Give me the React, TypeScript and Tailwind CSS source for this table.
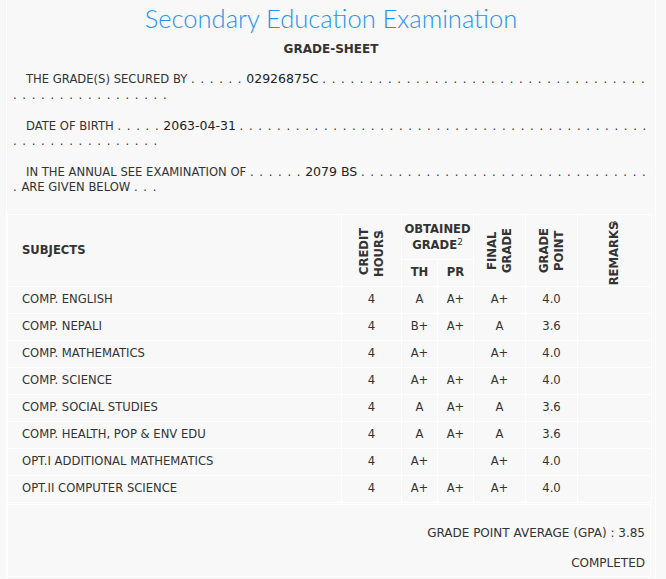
const body = "'DejaVu Sans', Verdana, sans-serif";

const subjects = [
  { name: "COMP. ENGLISH", ch: 4, th: "A", pr: "A+", fg: "A+", gp: "4.0" },
  { name: "COMP. NEPALI", ch: 4, th: "B+", pr: "A+", fg: "A", gp: "3.6" },
  { name: "COMP. MATHEMATICS", ch: 4, th: "A+", pr: "", fg: "A+", gp: "4.0" },
  { name: "COMP. SCIENCE", ch: 4, th: "A+", pr: "A+", fg: "A+", gp: "4.0" },
  { name: "COMP. SOCIAL STUDIES", ch: 4, th: "A", pr: "A+", fg: "A", gp: "3.6" },
  { name: "COMP. HEALTH, POP & ENV EDU", ch: 4, th: "A", pr: "A+", fg: "A", gp: "3.6" },
  { name: "OPT.I ADDITIONAL MATHEMATICS", ch: 4, th: "A+", pr: "", fg: "A+", gp: "4.0" },
  { name: "OPT.II COMPUTER SCIENCE", ch: 4, th: "A+", pr: "A+", fg: "A+", gp: "4.0" },
];

const dots = (n: number) => Array(n).fill(".").join(" ");

function InfoLine({
  label,
  pre,
  value,
  post,
  tail,
  leading = "leading-[15px]",
}: {
  label: string;
  pre: number;
  value: string;
  post: number;
  tail?: string;
  leading?: string;
}) {
  return (
    <p className={`pl-[6px] pr-[4px] indent-[13px] text-[11.6px] text-[#333] ${leading}`}>
      {label} <span className="tracking-[1px]">{dots(pre)}</span>{" "}
      <span className="text-[12.5px] font-medium text-[#222]">{value}</span>{" "}
      <span className="tracking-[1px]">{dots(post)}</span>
      {tail && (
        <>
          {" "}
          {tail} <span className="tracking-[1px]">{dots(3)}</span>
        </>
      )}
    </p>
  );
}

function Vertical({ children }: { children: React.ReactNode }) {
  return (
    <div className="flex justify-center">
      <div className="rotate-180 leading-[15px] [writing-mode:vertical-rl]">{children}</div>
    </div>
  );
}

export default function App() {
  return (
    <div className="min-h-screen bg-[#f8f8f8]" style={{ fontFamily: body }}>
      <div className="ml-[6px] w-[650px] border-x border-white pb-[1px]">
        {/* Header */}
        <h1
          className="pt-[3px] text-center text-[25.5px] font-light leading-[30px] text-[#1f93ee]"
          style={{ fontFamily: "Lato, sans-serif" }}
        >
          Secondary Education Examination
        </h1>
        <h2 className="mt-[8px] text-center text-[12px] font-bold leading-[16px] text-[#333]">GRADE-SHEET</h2>

        {/* Candidate info */}
        <div className="mt-[14px] space-y-[15px]">
          <InfoLine label="THE GRADE(S) SECURED BY" pre={6} value="02926875C" post={52} leading="leading-[16px]" />
          <InfoLine label="DATE OF BIRTH" pre={5} value="2063-04-31" post={60} />
          <InfoLine label="IN THE ANNUAL SEE EXAMINATION OF" pre={6} value="2079 BS" post={32} tail="ARE GIVEN BELOW" />
        </div>

        {/* Grades table */}
        <table className="mt-[19px] w-[644px] table-fixed border-collapse text-[11.6px] text-[#333]">
          <colgroup>
            <col className="w-[334px]" />
            <col className="w-[60px]" />
            <col className="w-[36px]" />
            <col className="w-[36px]" />
            <col className="w-[52px]" />
            <col className="w-[52px]" />
            <col className="w-[74px]" />
          </colgroup>
          <thead className="font-bold">
            <tr className="h-[45px]">
              <th rowSpan={2} className="border border-white pl-[14px] text-left">SUBJECTS</th>
              <th rowSpan={2} className="border border-white">
                <Vertical>CREDIT<br />HOURS<sup className="text-[9px] font-normal">1</sup></Vertical>
              </th>
              <th colSpan={2} className="border border-white leading-[16px]">
                OBTAINED<br />GRADE<sup className="text-[9px] font-normal">2</sup>
              </th>
              <th rowSpan={2} className="border border-white">
                <Vertical>FINAL<br />GRADE</Vertical>
              </th>
              <th rowSpan={2} className="border border-white">
                <Vertical>GRADE<br />POINT</Vertical>
              </th>
              <th rowSpan={2} className="border border-white">
                <Vertical>REMARKS<sup className="text-[9px] font-normal">3</sup></Vertical>
              </th>
            </tr>
            <tr className="h-[27px]">
              <th className="border border-white">TH</th>
              <th className="border border-white">PR</th>
            </tr>
          </thead>
          <tbody>
            {subjects.map((s) => (
              <tr key={s.name} className="h-[27px]">
                <td className="border border-white pl-[14px]">{s.name}</td>
                <td className="border border-white text-center">{s.ch}</td>
                <td className="border border-white text-center">{s.th}</td>
                <td className="border border-white text-center">{s.pr}</td>
                <td className="border border-white text-center">{s.fg}</td>
                <td className="border border-white text-center">{s.gp}</td>
                <td className="border border-white"></td>
              </tr>
            ))}
          </tbody>
        </table>

        {/* Summary */}
        <div className="mt-[1px] flex h-[73px] w-[644px] flex-col items-end gap-[14px] border border-white pr-[5px] pt-[20px] text-[12px] leading-[16px] text-[#333]">
          <p>GRADE POINT AVERAGE (GPA) : 3.85</p>
          <p>COMPLETED</p>
        </div>
      </div>
    </div>
  );
}
